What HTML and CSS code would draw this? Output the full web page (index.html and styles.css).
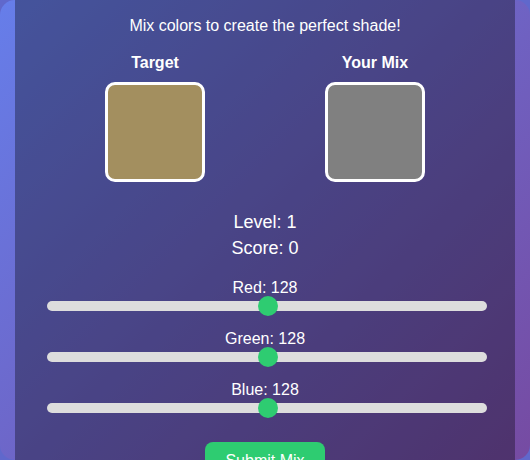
FILE: index.html
```html
<!DOCTYPE html>
<html lang="en">
<head>
    <meta charset="UTF-8">
    <meta name="viewport" content="width=device-width, initial-scale=1.0">
    <title>Color Mixer</title>
    <link rel="stylesheet" href="styles.css">
</head>
<body>
    <div class="app">
        <div class="game">
            <p class="intro">Mix colors to create the perfect shade!</p>
            <div class="swatches">
                <div class="swatch-col">
                    <h3>Target</h3>
                    <div class="swatch" style="background: rgb(163, 143, 95);"></div>
                </div>
                <div class="swatch-col">
                    <h3>Your Mix</h3>
                    <div class="swatch" style="background: rgb(128, 128, 128);"></div>
                </div>
            </div>
            <div class="stats">
                <div>Level: 1</div>
                <div>Score: 0</div>
            </div>
            <div class="sliders">
                <div class="slider-group">
                    <label for="red">Red: 128</label>
                    <input type="range" id="red" min="0" max="255" value="128">
                </div>
                <div class="slider-group">
                    <label for="green">Green: 128</label>
                    <input type="range" id="green" min="0" max="255" value="128">
                </div>
                <div class="slider-group">
                    <label for="blue">Blue: 128</label>
                    <input type="range" id="blue" min="0" max="255" value="128">
                </div>
            </div>
            <button class="submit">Submit Mix</button>
        </div>
    </div>
</body>
</html>
```
FILE: styles.css
```css
*, *::before, *::after {
    box-sizing: border-box;
}
html { background: #6068cc; }
body {
    font-family: "Liberation Sans", Arial, sans-serif;
    margin: 0;
    padding: 0;
    color: #fff;
}
.app {
    height: 460px;
    padding: 0 15px;
    border-radius: 15px;
    background: linear-gradient(135deg, #667eea 0%, #764ba2 100%);
    overflow: hidden;
}
.game {
    height: 100%;
    padding-top: 17px;
    text-align: center;
    background: rgba(0, 0, 0, 0.33);
}
.intro { margin: 0; font-size: 16px; line-height: 18px; }
.swatches {
    display: flex;
    justify-content: center;
    gap: 120px;
    margin-top: 19px;
}
.swatch-col h3 {
    margin: 0 0 10px;
    font-size: 16px;
    line-height: 18px;
}
.swatch {
    width: 100px;
    height: 100px;
    border: 3px solid #fff;
    border-radius: 10px;
}
.stats {
    margin-top: 27px;
    font-size: 18px;
    line-height: 26px;
}
.sliders {
    display: flex;
    flex-direction: column;
    gap: 19px;
    margin-top: 18px;
}
.slider-group label {
    display: block;
    font-size: 16px;
    line-height: 18px;
}
.slider-group input {
    -webkit-appearance: none;
    appearance: none;
    display: block;
    width: 440px;
    height: 10px;
    margin: 4px 0 0 32px;
    border-radius: 5px;
    background: #ddd;
    outline: none;
}
.slider-group input::-webkit-slider-thumb {
    -webkit-appearance: none;
    appearance: none;
    width: 20px;
    height: 20px;
    border-radius: 50%;
    background: #2ecc71;
    cursor: pointer;
}
.submit {
    margin-top: 29px;
    padding: 10px 20px;
    border: none;
    border-radius: 8px;
    background: #2ecc71;
    color: #fff;
    font-family: inherit;
    font-size: 16px;
    cursor: pointer;
}
```
